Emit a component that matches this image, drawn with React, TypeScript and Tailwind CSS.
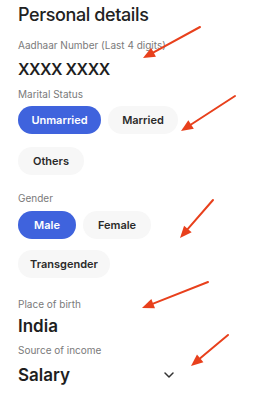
import React from "react";

const Arrow = ({ x1, y1, x2, y2 }: { x1: number; y1: number; x2: number; y2: number }) => {
  const dx = x2 - x1;
  const dy = y2 - y1;
  const len = Math.hypot(dx, dy);
  const ux = dx / len;
  const uy = dy / len;
  const hl = 12;
  const hw = 5;
  const bx = x2 - ux * hl;
  const by = y2 - uy * hl;
  const p1 = `${bx - uy * hw},${by + ux * hw}`;
  const p2 = `${bx + uy * hw},${by - ux * hw}`;
  return (
    <g>
      <line x1={x1} y1={y1} x2={bx} y2={by} stroke="#e8401c" strokeWidth={2} strokeLinecap="round" />
      <polygon points={`${x2},${y2} ${p1} ${p2}`} fill="#e8401c" />
    </g>
  );
};

const Pill = ({ label, active, w }: { label: string; active?: boolean; w: string }) => (
  <div
    className={`h-[28px] ${w} rounded-full flex items-center justify-center text-[11px] font-semibold ${
      active ? "bg-[#3f63dd] text-white" : "bg-[#f7f7f7] text-[#2a2a2a]"
    }`}
  >
    {label}
  </div>
);

export default function App() {
  return (
    <div
      className="relative w-[260px] h-[400px] bg-white overflow-hidden"
      style={{ fontFamily: "Inter, 'Noto Sans', sans-serif" }}
    >
      <div className="pl-[18px] pt-[3px] flex flex-col">
        <div className="text-[18px] leading-[24px] font-medium text-[#222] tracking-[-0.4px]">Personal details</div>
        <div className="mt-[12px] text-[10px] leading-[12px] text-[#7a7a7a]">Aadhaar Number (Last 4 digits)</div>
        <div className="mt-[8px] text-[16px] leading-[20px] font-semibold text-[#1e1e1e] tracking-[-0.5px]">XXXX XXXX</div>
        <div className="mt-[9px] text-[10px] leading-[12px] text-[#7a7a7a]">Marital Status</div>
        <div className="mt-[6px] flex gap-[7px]">
          <Pill label="Unmarried" active w="w-[83px]" />
          <Pill label="Married" w="w-[70px]" />
        </div>
        <div className="mt-[13px] flex">
          <Pill label="Others" w="w-[66px]" />
        </div>
        <div className="mt-[17px] text-[10px] leading-[12px] text-[#7a7a7a]">Gender</div>
        <div className="mt-[7px] flex gap-[7px]">
          <Pill label="Male" active w="w-[58px]" />
          <Pill label="Female" w="w-[68px]" />
        </div>
        <div className="mt-[11px] flex">
          <Pill label="Transgender" w="w-[92px]" />
        </div>
        <div className="mt-[20px] text-[10px] leading-[12px] text-[#7a7a7a]">Place of birth</div>
        <div className="mt-[6px] text-[17px] leading-[20px] font-semibold text-[#1e1e1e]">India</div>
        <div className="mt-[8px] text-[10px] leading-[12px] text-[#7a7a7a]">Source of income</div>
        <div className="mt-[9px] flex items-center w-[157px] justify-between">
          <div className="text-[17px] leading-[20px] font-semibold text-[#1e1e1e]">Salary</div>
          <svg width="12" height="8" viewBox="0 0 12 8">
            <path d="M2 2 L6 6 L10 2" stroke="#333" strokeWidth="1.5" fill="none" strokeLinecap="round" strokeLinejoin="round" />
          </svg>
        </div>
      </div>
      <svg className="absolute inset-0 pointer-events-none" width="260" height="400">
        <Arrow x1={200} y1={27} x2={143} y2={58} />
        <Arrow x1={235} y1={96} x2={181} y2={131} />
        <Arrow x1={213} y1={200} x2={180} y2={238} />
        <Arrow x1={208} y1={282} x2={142} y2={308} />
        <Arrow x1={228} y1={335} x2={191} y2={366} />
      </svg>
    </div>
  );
}
